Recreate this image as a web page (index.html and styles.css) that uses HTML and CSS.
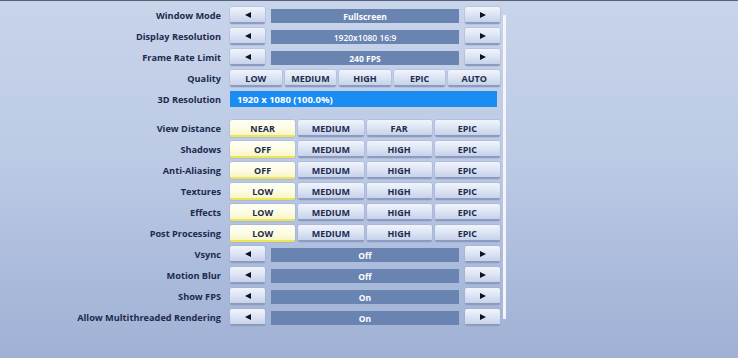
FILE: index.html
```html
<!DOCTYPE html>
<html>
<head>
<meta charset="utf-8">
<link rel="stylesheet" href="styles.css">
</head>
<body>
<div class="screen">
  <div class="panel">
    <div class="rows">
      <div class="row"><div class="label">Window Mode</div><div class="ctrl arrows"><div class="btn arrow"><svg width="6" height="6" viewBox="0 0 6 6"><polygon points="6,0 6,6 0,3"/></svg></div><div class="value">Fullscreen</div><div class="btn arrow"><svg width="6" height="6" viewBox="0 0 6 6"><polygon points="0,0 0,6 6,3"/></svg></div></div></div>
      <div class="row"><div class="label">Display Resolution</div><div class="ctrl arrows"><div class="btn arrow"><svg width="6" height="6" viewBox="0 0 6 6"><polygon points="6,0 6,6 0,3"/></svg></div><div class="value thin">1920x1080 16:9</div><div class="btn arrow"><svg width="6" height="6" viewBox="0 0 6 6"><polygon points="0,0 0,6 6,3"/></svg></div></div></div>
      <div class="row"><div class="label">Frame Rate Limit</div><div class="ctrl arrows"><div class="btn arrow"><svg width="6" height="6" viewBox="0 0 6 6"><polygon points="6,0 6,6 0,3"/></svg></div><div class="value">240 FPS</div><div class="btn arrow"><svg width="6" height="6" viewBox="0 0 6 6"><polygon points="0,0 0,6 6,3"/></svg></div></div></div>
      <div class="row"><div class="label">Quality</div><div class="ctrl five"><div class="btn">LOW</div><div class="btn">MEDIUM</div><div class="btn">HIGH</div><div class="btn">EPIC</div><div class="btn">AUTO</div></div></div>
      <div class="row"><div class="label">3D Resolution</div><div class="ctrl"><div class="slider">1920 x 1080 (100.0%)</div></div></div>

      <div class="row first"><div class="label">View Distance</div><div class="ctrl four"><div class="btn sel">NEAR</div><div class="btn">MEDIUM</div><div class="btn">FAR</div><div class="btn">EPIC</div></div></div>
      <div class="row"><div class="label">Shadows</div><div class="ctrl four"><div class="btn sel">OFF</div><div class="btn">MEDIUM</div><div class="btn">HIGH</div><div class="btn">EPIC</div></div></div>
      <div class="row"><div class="label">Anti-Aliasing</div><div class="ctrl four"><div class="btn sel">OFF</div><div class="btn">MEDIUM</div><div class="btn">HIGH</div><div class="btn">EPIC</div></div></div>
      <div class="row"><div class="label">Textures</div><div class="ctrl four"><div class="btn sel">LOW</div><div class="btn">MEDIUM</div><div class="btn">HIGH</div><div class="btn">EPIC</div></div></div>
      <div class="row"><div class="label">Effects</div><div class="ctrl four"><div class="btn sel">LOW</div><div class="btn">MEDIUM</div><div class="btn">HIGH</div><div class="btn">EPIC</div></div></div>
      <div class="row"><div class="label">Post Processing</div><div class="ctrl four"><div class="btn sel">LOW</div><div class="btn">MEDIUM</div><div class="btn">HIGH</div><div class="btn">EPIC</div></div></div>

      <div class="row"><div class="label">Vsync</div><div class="ctrl arrows"><div class="btn arrow"><svg width="6" height="6" viewBox="0 0 6 6"><polygon points="6,0 6,6 0,3"/></svg></div><div class="value">Off</div><div class="btn arrow"><svg width="6" height="6" viewBox="0 0 6 6"><polygon points="0,0 0,6 6,3"/></svg></div></div></div>
      <div class="row"><div class="label">Motion Blur</div><div class="ctrl arrows"><div class="btn arrow"><svg width="6" height="6" viewBox="0 0 6 6"><polygon points="6,0 6,6 0,3"/></svg></div><div class="value">Off</div><div class="btn arrow"><svg width="6" height="6" viewBox="0 0 6 6"><polygon points="0,0 0,6 6,3"/></svg></div></div></div>
      <div class="row"><div class="label">Show FPS</div><div class="ctrl arrows"><div class="btn arrow"><svg width="6" height="6" viewBox="0 0 6 6"><polygon points="6,0 6,6 0,3"/></svg></div><div class="value">On</div><div class="btn arrow"><svg width="6" height="6" viewBox="0 0 6 6"><polygon points="0,0 0,6 6,3"/></svg></div></div></div>
      <div class="row"><div class="label">Allow Multithreaded Rendering</div><div class="ctrl arrows"><div class="btn arrow"><svg width="6" height="6" viewBox="0 0 6 6"><polygon points="6,0 6,6 0,3"/></svg></div><div class="value">On</div><div class="btn arrow"><svg width="6" height="6" viewBox="0 0 6 6"><polygon points="0,0 0,6 6,3"/></svg></div></div></div>
    </div>
    <div class="scrollbar"></div>
  </div>
</div>
</body>
</html>
```
FILE: styles.css
```css
html, body {
  margin: 0;
  padding: 0;
}
body {
  width: 738px;
  height: 358px;
  overflow: hidden;
  font-family: "Open Sans", "Noto Sans", "DejaVu Sans", sans-serif;
  font-weight: 700;
  background: linear-gradient(180deg, #c8d4ea 0%, #bccae5 45%, #a9b9da 80%, #a0b1d4 100%);
}
.screen {
  height: 357px;
  border-top: 1px solid #56627b;
}
.panel {
  display: flex;
  align-items: flex-start;
  padding-top: 6px;
}
.rows {
  display: flex;
  flex-direction: column;
  gap: 4px;
}
.row {
  display: grid;
  grid-template-columns: 221px 270px;
  column-gap: 9px;
  height: 17px;
  align-items: center;
}
.row.first {
  margin-top: 8px;
}
.label {
  text-align: right;
  font-size: 9.2px;
  color: #1c2a4d;
  white-space: nowrap;
  line-height: 17px;
}
.ctrl {
  display: flex;
  gap: 3px;
  height: 17px;
}
.ctrl.arrows {
  gap: 6px;
  align-items: flex-end;
}
.ctrl.five .btn, .ctrl.four .btn {
  flex: 1;
}
.btn {
  box-sizing: border-box;
  height: 17px;
  display: flex;
  align-items: center;
  justify-content: center;
  font-size: 9px;
  color: #1d2b4e;
  border-radius: 2px;
  background: linear-gradient(180deg, #f1f4fb 0%, #dfe6f5 45%, #c7d2ea 100%);
  border-bottom: 2px solid #8d9bbf;
  box-shadow: 0 0 0 0.5px rgba(150,165,200,0.6);
  padding-top: 1px;
}
.btn.sel {
  background: linear-gradient(180deg, #fffff4 0%, #fdfce4 55%, #f8f5c4 100%);
  border-bottom: 2px solid #ece45a;
}
.btn.arrow {
  width: 35px;
  flex: none;
}
.btn.arrow svg {
  display: block;
  fill: #0d1220;
}
.value {
  flex: 1;
  height: 14px;
  margin-bottom: 1px;
  background: #6a84b1;
  color: #ffffff;
  font-size: 8.5px;
  display: flex;
  align-items: center;
  justify-content: center;
}
.value.thin {
  font-weight: 600;
}
.slider {
  width: 267px;
  height: 16px;
  box-sizing: border-box;
  background: #1b8cf2;
  color: #ffffff;
  font-size: 9.5px;
  display: flex;
  align-items: center;
  padding-left: 7px;
}
.scrollbar {
  width: 3px;
  height: 304px;
  margin-top: 8px;
  margin-left: 3px;
  background: #f3f5fb;
}
```
